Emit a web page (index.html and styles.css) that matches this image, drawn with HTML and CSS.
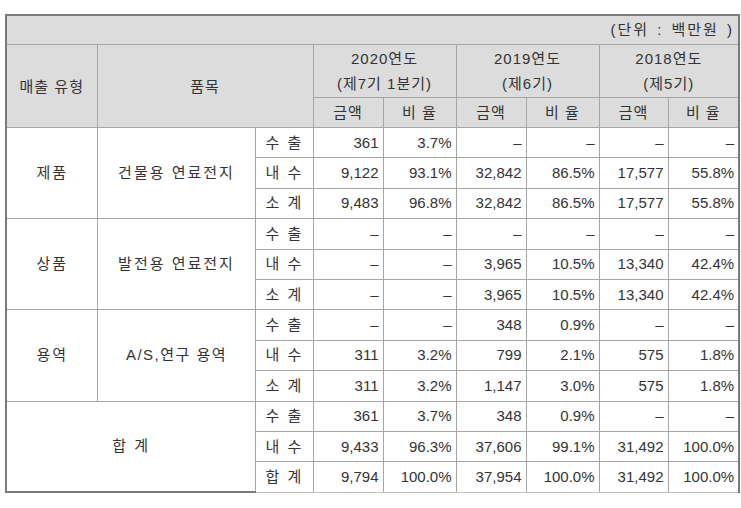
FILE: index.html
```html
<!DOCTYPE html>
<html lang="ko">
<head>
<meta charset="utf-8">
<link rel="stylesheet" href="styles.css">
</head>
<body>
<table class="sales">
  <colgroup>
    <col class="c1"><col class="c2"><col class="c3">
    <col class="c4"><col class="c5"><col class="c6"><col class="c7"><col class="c8"><col class="c9">
  </colgroup>
  <thead>
    <tr class="h1"><th colspan="9" class="unit">(단위 : 백만원 )</th></tr>
    <tr class="h2">
      <th rowspan="2">매출 유형</th>
      <th rowspan="2" colspan="2">품목</th>
      <th colspan="2">2020연도<br>(제7기 1분기)</th>
      <th colspan="2">2019연도<br>(제6기)</th>
      <th colspan="2">2018연도<br>(제5기)</th>
    </tr>
    <tr class="h3">
      <th>금액</th><th>비 율</th><th>금액</th><th>비 율</th><th>금액</th><th>비 율</th>
    </tr>
  </thead>
  <tbody>
    <tr><td rowspan="3" class="ctr">제품</td><td rowspan="3" class="ctr">건물용 연료전지</td><td class="ctr">수 출</td><td>361</td><td>3.7%</td><td>–</td><td>–</td><td>–</td><td>–</td></tr>
    <tr><td class="ctr">내 수</td><td>9,122</td><td>93.1%</td><td>32,842</td><td>86.5%</td><td>17,577</td><td>55.8%</td></tr>
    <tr><td class="ctr">소 계</td><td>9,483</td><td>96.8%</td><td>32,842</td><td>86.5%</td><td>17,577</td><td>55.8%</td></tr>

    <tr><td rowspan="3" class="ctr">상품</td><td rowspan="3" class="ctr">발전용 연료전지</td><td class="ctr">수 출</td><td>–</td><td>–</td><td>–</td><td>–</td><td>–</td><td>–</td></tr>
    <tr><td class="ctr">내 수</td><td>–</td><td>–</td><td>3,965</td><td>10.5%</td><td>13,340</td><td>42.4%</td></tr>
    <tr><td class="ctr">소 계</td><td>–</td><td>–</td><td>3,965</td><td>10.5%</td><td>13,340</td><td>42.4%</td></tr>

    <tr><td rowspan="3" class="ctr">용역</td><td rowspan="3" class="ctr latin">A/S,연구 용역</td><td class="ctr">수 출</td><td>–</td><td>–</td><td>348</td><td>0.9%</td><td>–</td><td>–</td></tr>
    <tr><td class="ctr">내 수</td><td>311</td><td>3.2%</td><td>799</td><td>2.1%</td><td>575</td><td>1.8%</td></tr>
    <tr><td class="ctr">소 계</td><td>311</td><td>3.2%</td><td>1,147</td><td>3.0%</td><td>575</td><td>1.8%</td></tr>

    <tr><td rowspan="3" colspan="2" class="ctr total">합 계</td><td class="ctr">수 출</td><td>361</td><td>3.7%</td><td>348</td><td>0.9%</td><td>–</td><td>–</td></tr>
    <tr><td class="ctr">내 수</td><td>9,433</td><td>96.3%</td><td>37,606</td><td>99.1%</td><td>31,492</td><td>100.0%</td></tr>
    <tr class="last"><td class="ctr">합 계</td><td>9,794</td><td>100.0%</td><td>37,954</td><td>100.0%</td><td>31,492</td><td>100.0%</td></tr>
  </tbody>
</table>
</body>
</html>
```
FILE: styles.css
```css
html, body {
  margin: 0;
  padding: 0;
  background: #ffffff;
}

body {
  padding: 14px 0 0 5px;
  font-family: "Liberation Sans", "Noto Sans CJK KR", sans-serif;
  font-size: 15px;
  color: #333333;
}

.sales {
  border-collapse: collapse;
  table-layout: fixed;
  width: 735px;
  border-top: 2px solid #7a7a7a;
  border-left: 2px solid #7a7a7a;
  border-right: 2px solid #7a7a7a;
}

.c1 { width: 91px; }
.c2 { width: 158px; }
.c3 { width: 58px; }
.c4 { width: 70px; }
.c5 { width: 73px; }
.c6 { width: 70px; }
.c7 { width: 73px; }
.c8 { width: 69px; }
.c9 { width: 71px; }

.sales th,
.sales td {
  border: 1px solid #a6a6a6;
  padding: 0 5px;
  font-weight: normal;
  line-height: 18px;
  white-space: nowrap;
  overflow: hidden;
}

.sales th {
  background: #dcdcdc;
  text-align: center;
  letter-spacing: 1px;
}

.sales td {
  text-align: right;
  height: 29.4px;
  padding: 0 4px 0 5px;
}

.sales td.ctr {
  text-align: center;
  letter-spacing: 2px;
}

.sales td.latin {
  letter-spacing: 1.5px;
}

.h1 th { height: 28px; }
.sales th.unit {
  text-align: right;
  padding-right: 4px;
  letter-spacing: 2px;
  word-spacing: 2px;
}

.h2 th {
  height: 52px;
  line-height: 25px;
}

.h3 th { height: 29px; }

.sales td.total {
  border-bottom: 2px solid #7a7a7a;
}

.last td {
  border-bottom: 1px solid #bdbdbd;
}
```
